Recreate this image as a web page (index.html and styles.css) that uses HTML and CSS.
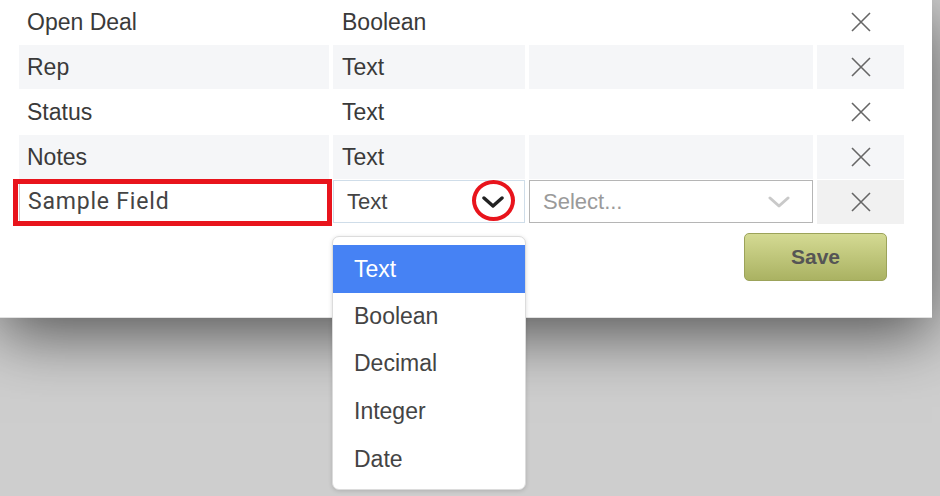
FILE: index.html
```
<!DOCTYPE html>
<html>
<head>
<meta charset="utf-8">
<link rel="stylesheet" href="styles.css">
</head>
<body>
<div class="panel">
  <div class="grid">
    <div class="cell">Open Deal</div>
    <div class="cell">Boolean</div>
    <div class="cell"></div>
    <div class="cell x"><svg width="20" height="20" viewBox="0 0 20 20"><path d="M1 1L19 19M19 1L1 19" stroke="#666" stroke-width="1.6" fill="none"/></svg></div>

    <div class="cell alt">Rep</div>
    <div class="cell alt">Text</div>
    <div class="cell alt"></div>
    <div class="cell alt x"><svg width="20" height="20" viewBox="0 0 20 20"><path d="M1 1L19 19M19 1L1 19" stroke="#666" stroke-width="1.6" fill="none"/></svg></div>

    <div class="cell">Status</div>
    <div class="cell">Text</div>
    <div class="cell"></div>
    <div class="cell x"><svg width="20" height="20" viewBox="0 0 20 20"><path d="M1 1L19 19M19 1L1 19" stroke="#666" stroke-width="1.6" fill="none"/></svg></div>

    <div class="cell alt">Notes</div>
    <div class="cell alt">Text</div>
    <div class="cell alt"></div>
    <div class="cell alt x"><svg width="20" height="20" viewBox="0 0 20 20"><path d="M1 1L19 19M19 1L1 19" stroke="#666" stroke-width="1.6" fill="none"/></svg></div>

    <div class="input name">Sample Field</div>
    <div class="input type">
      <span>Text</span>
      <svg class="chev-dark" width="22" height="12" viewBox="0 0 22 12"><path d="M2 2L11 10L20 2" stroke="#222" stroke-width="3.4" fill="none" stroke-linecap="round" stroke-linejoin="round"/></svg>
    </div>
    <div class="input sel">
      <span>Select...</span>
      <svg width="22" height="12" viewBox="0 0 22 12"><path d="M2 2L11 10L20 2" stroke="#c9c9c9" stroke-width="3" fill="none" stroke-linecap="round" stroke-linejoin="round"/></svg>
    </div>
    <div class="cell dark x"><svg width="20" height="20" viewBox="0 0 20 20"><path d="M1 1L19 19M19 1L1 19" stroke="#666" stroke-width="1.6" fill="none"/></svg></div>
  </div>
  <div class="actions">
    <button class="save">Save</button>
  </div>
</div>

<div class="mark-box"></div>
<div class="mark-circle"></div>

<ul class="menu">
  <li class="active">Text</li>
  <li>Boolean</li>
  <li>Decimal</li>
  <li>Integer</li>
  <li>Date</li>
</ul>
</body>
</html>
```

FILE: styles.css
```
html, body {
  margin: 0;
  padding: 0;
}
body {
  width: 940px;
  height: 496px;
  background: #cecece;
  overflow: hidden;
  font-family: "Liberation Sans", Arial, sans-serif;
  color: #3a3a3a;
  position: relative;
}
.panel {
  width: 932px;
  height: 318px;
  background: #fff;
  box-sizing: border-box;
  padding-left: 19px;
  box-shadow: 0 16px 60px rgba(0, 0, 0, 0.6);
  border-bottom: 1px solid #e2e2e2;
}
.grid {
  display: grid;
  grid-template-columns: 310px 192px 284px 87px;
  grid-auto-rows: 44px;
  column-gap: 4px;
  row-gap: 1px;
}
.cell {
  display: flex;
  align-items: center;
  padding-left: 8px;
  font-size: 23px;
}
.cell:nth-child(4n+2) {
  padding-left: 9px;
}
.alt {
  background: #f5f6f8;
}
.dark {
  background: #f1f1f1;
}
.x {
  justify-content: center;
  padding-left: 0 !important;
}
.input {
  box-sizing: border-box;
  height: 43px;
  display: flex;
  align-items: center;
  font-size: 22px;
}
.name {
  border: 1px solid #ccc;
  padding-left: 8px;
  font-family: Roboto, "Liberation Sans", sans-serif;
  font-size: 23px;
  letter-spacing: 0.8px;
  color: #444;
}
.type {
  border: 1px solid #cfdde9;
  padding: 0 20px 0 13px;
  justify-content: space-between;
  color: #444;
}
.sel {
  border: 1.5px solid #b5b5b5;
  padding: 0 22px 0 13px;
  justify-content: space-between;
  color: #9a9a9a;
}
.actions {
  display: flex;
  justify-content: flex-end;
  padding-right: 45px;
  margin-top: 9px;
}
.save {
  width: 143px;
  height: 48px;
  border: 1px solid #9ca35a;
  border-radius: 5px;
  background: linear-gradient(#d4da93, #aab262);
  font-family: "Liberation Sans", Arial, sans-serif;
  font-weight: bold;
  font-size: 21px;
  color: #555;
  padding: 0;
}
.mark-box {
  position: absolute;
  left: 13px;
  top: 179px;
  width: 309px;
  height: 37px;
  border: 5px solid #e8141c;
}
.mark-circle {
  position: absolute;
  left: 472px;
  top: 180px;
  width: 35px;
  height: 33px;
  border: 4px solid #e8141c;
  border-radius: 50%;
}
.menu {
  position: absolute;
  left: 332px;
  top: 236px;
  width: 194px;
  height: 254px;
  box-sizing: border-box;
  margin: 0;
  padding: 8px 0 0;
  list-style: none;
  background: #fff;
  border: 1px solid #dcdcdc;
  border-radius: 7px;
  box-shadow: 0 1px 4px rgba(0, 0, 0, 0.15);
}
.menu li {
  height: 47.6px;
  display: flex;
  align-items: center;
  padding-left: 21px;
  font-size: 23px;
  color: #444;
}
.menu li:first-child {
  padding-top: 1px;
  box-sizing: border-box;
}
.menu li.active {
  background: #4682f4;
  color: #fff;
}
```
